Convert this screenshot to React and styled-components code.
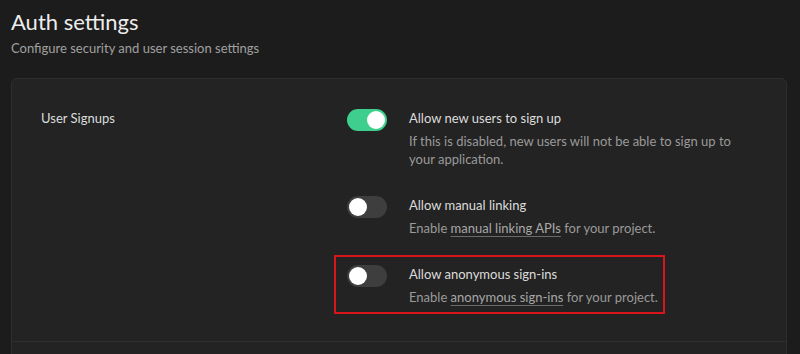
import React from "react";
import styled, { createGlobalStyle } from "styled-components";

const GlobalStyle = createGlobalStyle`
  html, body {
    margin: 0;
    padding: 0;
    background: #1c1c1c;
    font-family: Lato, "Noto Sans", sans-serif;
    -webkit-font-smoothing: antialiased;
  }
`;

const Page = styled.div`
  width: 800px;
  height: 354px;
  overflow: hidden;
  box-sizing: border-box;
  padding: 8px 13px 0 11px;
`;

const Title = styled.h1`
  margin: 0;
  font-size: 22px;
  line-height: 28px;
  font-weight: 400;
  color: #ededed;
`;

const Subtitle = styled.p`
  margin: 3px 0 0;
  font-size: 13px;
  line-height: 18px;
  color: #a0a0a0;
`;

const Card = styled.div`
  margin-top: 21px;
  background: #232323;
  border: 1px solid #2e2e2e;
  border-radius: 6px;
`;

const Section = styled.div`
  display: grid;
  grid-template-columns: 306px 1fr;
  padding: 29px 29px 35px;
  border-bottom: 1px solid #2e2e2e;
  min-height: 40px;
`;

const SectionLabel = styled.div`
  font-size: 13px;
  line-height: 20px;
  color: #dcdcdc;
`;

const Rows = styled.div`
  display: flex;
  flex-direction: column;
  gap: 27px;
`;

const Row = styled.div`
  display: flex;
  align-items: flex-start;
  gap: 22px;
  width: ${(p) => (p.$highlight ? "fit-content" : "auto")};
  margin: ${(p) => (p.$highlight ? "-9px 0 -8px -13px" : "0")};
  padding: ${(p) => (p.$highlight ? "7px 5px 6px 11px" : "0")};
  border: ${(p) => (p.$highlight ? "2px solid #d9141a" : "none")};
`;

const Track = styled.div`
  flex: none;
  width: 40px;
  height: 22px;
  margin-top: 1px;
  border-radius: 11px;
  background: ${(p) => (p.$on ? "#3ecf8e" : "#3e3e3e")};
  display: flex;
  align-items: center;
  justify-content: ${(p) => (p.$on ? "flex-end" : "flex-start")};
  padding: 0 2px;
  box-sizing: border-box;
`;

const Knob = styled.div`
  width: 18px;
  height: 18px;
  border-radius: 50%;
  background: #ffffff;
`;

const Text = styled.div`
  display: flex;
  flex-direction: column;
  gap: 4px;
  max-width: 340px;
`;

const Label = styled.div`
  font-size: 13px;
  line-height: 20px;
  color: #dcdcdc;
`;

const Desc = styled.div`
  font-size: 13px;
  line-height: 18px;
  color: #9a9a9a;
`;

const Link = styled.a`
  color: #a8a8a8;
  text-decoration: underline;
  text-decoration-color: #6a6a6a;
  text-underline-offset: 3px;
`;

function Toggle({ on }) {
  return (
    <Track $on={on}>
      <Knob />
    </Track>
  );
}

export default function App() {
  return (
    <Page>
      <GlobalStyle />
      <Title>Auth settings</Title>
      <Subtitle>Configure security and user session settings</Subtitle>
      <Card>
        <Section>
          <SectionLabel>User Signups</SectionLabel>
          <Rows>
            <Row>
              <Toggle on />
              <Text>
                <Label>Allow new users to sign up</Label>
                <Desc>
                  If this is disabled, new users will not be able to sign up to
                  your application.
                </Desc>
              </Text>
            </Row>
            <Row>
              <Toggle />
              <Text>
                <Label>Allow manual linking</Label>
                <Desc>
                  Enable <Link>manual linking APIs</Link> for your project.
                </Desc>
              </Text>
            </Row>
            <Row $highlight>
              <Toggle />
              <Text>
                <Label>Allow anonymous sign-ins</Label>
                <Desc>
                  Enable <Link>anonymous sign-ins</Link> for your project.
                </Desc>
              </Text>
            </Row>
          </Rows>
        </Section>
        <Section />
      </Card>
    </Page>
  );
}
